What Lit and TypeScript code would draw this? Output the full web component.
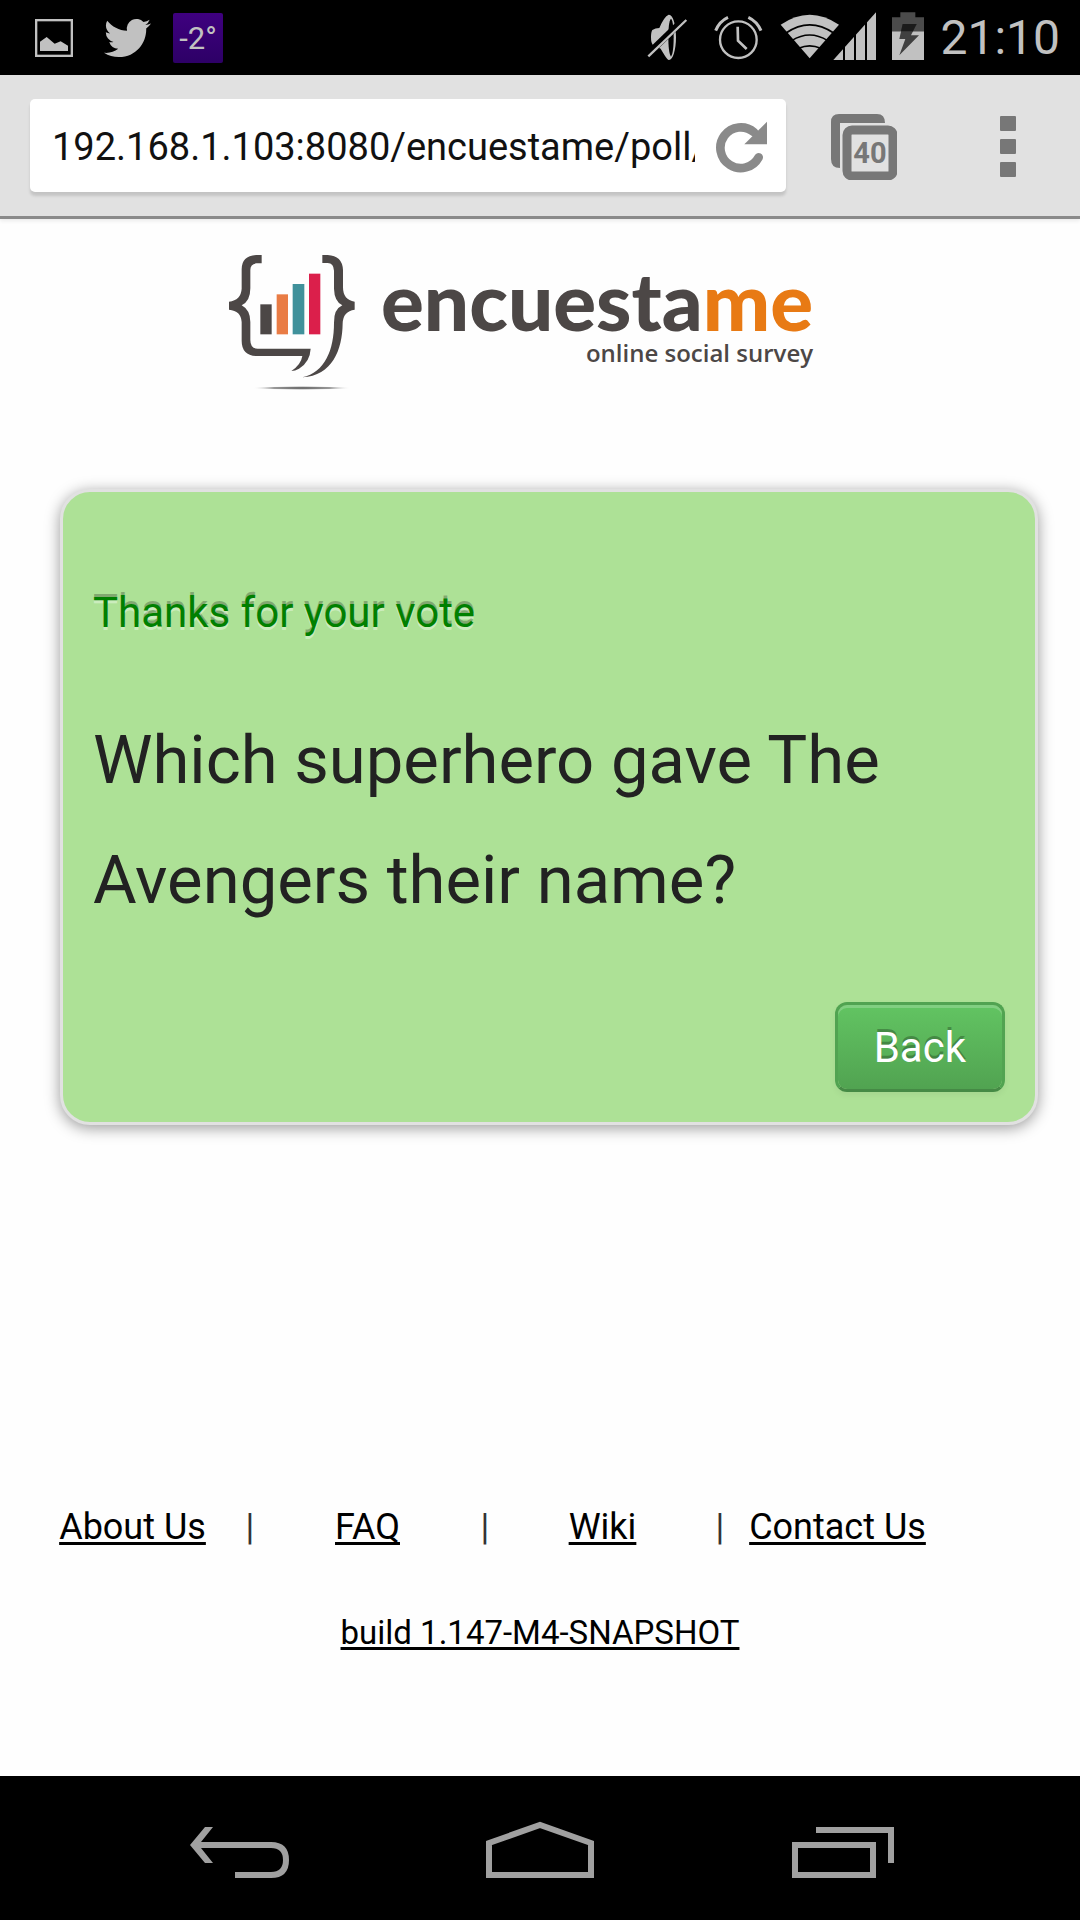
import { LitElement, html, css } from "lit";
import { customElement } from "lit/decorators.js";

@customElement("status-bar")
export class StatusBar extends LitElement {
  static styles = css`
    :host { display: block; background: #000; color: #c1c1c1; }
    .bar { display: flex; justify-content: space-between; align-items: center; height: 75px; padding: 0 20px 0 35px; }
    .group { display: flex; align-items: center; }
    .left { gap: 22px; }
    .right { gap: 16px; }
    svg { display: block; }
    .weather {
      width: 50px; height: 50px; line-height: 52px; border-radius: 2px; box-sizing: border-box;
      background: linear-gradient(#3f007f, #2d0066); text-align: center; font-size: 31px;
    }
    .clock { font-size: 48px; line-height: 77px; }
  `;

  render() {
    return html`
      <div class="bar">
        <div class="group left">
          <svg width="38" height="38" viewBox="0 0 114 114" aria-hidden="true">
            <rect x="3.5" y="3.5" width="107" height="107" fill="none" stroke="#c1c1c1" stroke-width="7" />
            <path fill="#c1c1c1" d="M15 96V68L35 54L59 74L77 67L99 80V96Z" />
          </svg>
          <svg width="56" height="48" viewBox="-4.6 0 28.6 24" aria-hidden="true">
            <path fill="#c1c1c1" d="M23.953 4.57a10 10 0 01-2.825.775 4.958 4.958 0 002.163-2.723c-.951.555-2.005.959-3.127 1.184a4.92 4.92 0 00-8.384 4.482C7.69 8.095 4.067 6.13 1.64 3.162a4.822 4.822 0 00-.666 2.475c0 1.71.87 3.213 2.188 4.096a4.904 4.904 0 01-2.228-.616v.06a4.923 4.923 0 003.946 4.827 4.996 4.996 0 01-2.212.085 4.936 4.936 0 004.604 3.417 9.867 9.867 0 01-6.102 2.105c-.39 0-.779-.023-1.17-.067a13.995 13.995 0 007.557 2.209c9.053 0 13.998-7.496 13.998-13.985 0-.21 0-.42-.015-.63A9.935 9.935 0 0024 4.59z" />
          </svg>
          <span class="weather">-2°</span>
        </div>
        <div class="group right">
          <svg width="51" height="75" viewBox="81 0 153 225" aria-hidden="true">
            <path fill="#c1c1c1" d="M146 44C158 42 168 72 168 112S158 182 146 180C140 176 130 160 122 146L98 134Q93 128 93 112Q93 96 97 90Q106 84 118 84Q132 50 146 44Z" />
            <path fill="#000" d="M153 56C159 62 161 86 161 112S159 162 153 170C147 162 145 138 145 112S147 62 153 56Z" />
            <path d="M82 164L196 54" stroke="#000" stroke-width="20" />
            <path d="M85 169L199 60" stroke="#c1c1c1" stroke-width="7" />
          </svg>
          <svg width="50" height="75" viewBox="282 0 150 225" fill="none" stroke="#c1c1c1" aria-hidden="true">
            <circle cx="355" cy="119" r="55" stroke-width="7" />
            <path d="M353 80L354 122L380 147" stroke-width="8" />
            <path d="M287 92Q298 64 324 52M385 52Q411 64 423 92" stroke-width="9" />
          </svg>
          <svg width="96" height="75" viewBox="480 0 288 225" aria-hidden="true">
            <path fill="#c1c1c1" d="M482 74Q569 14 657 74L569 175Z" />
            <g fill="none" stroke="#000" stroke-width="5">
              <path d="M498 99Q569 50 641 99" />
              <path d="M515 122Q569 88 623 122" />
              <path d="M536 145Q569 130 602 145" />
            </g>
            <path fill="#c1c1c1" d="M640 180L768 37V180Z" />
            <path d="M672 100V182M705 60V182M738 40V182" stroke="#000" stroke-width="6" />
          </svg>
          <svg width="32" height="75" viewBox="816 0 96 225" aria-hidden="true">
            <path fill="#4b4b4b" d="M816 52H841V37H886V52H912V94H816Z" />
            <path fill="#c1c1c1" d="M816 94H912V180H816Z" />
            <path fill="#404040" d="M848 72H890L873 106H897L838 166L856 117H838Z" />
            <path fill="#1b1b1b" d="M848 72H890L879 94H843Z" />
          </svg>
          <time class="clock">21:10</time>
        </div>
      </div>
    `;
  }
}

@customElement("browser-toolbar")
export class BrowserToolbar extends LitElement {
  static styles = css`
    :host { display: block; background: #e1e1e1; border-bottom: 3px solid #8a8a8a; box-shadow: 0 2px 4px rgba(0, 0, 0, 0.08); }
    .bar { display: flex; align-items: center; padding: 24px 50px 24px 30px; }
    .omnibox {
      flex: 1; min-width: 0; display: flex; align-items: center; height: 93px; box-sizing: border-box;
      padding: 2px 17px 0 22px; gap: 20px; background: #fff; border-radius: 5px; box-shadow: 0 4px 3px rgba(0, 0, 0, 0.13);
    }
    .url {
      flex: 1; min-width: 0; height: 60px; padding: 0; border: 0; outline: 0; background: none;
      font: 38px/60px Roboto, sans-serif; color: #111;
    }
    button { display: block; padding: 0; border: 0; background: none; cursor: pointer; }
    svg { display: block; }
    .tabs { margin: 0 89px 0 45px; padding-top: 2px; }
    .count { font: bold 29px Roboto, sans-serif; fill: #777; }
  `;

  render() {
    return html`
      <div class="bar">
        <div class="omnibox">
          <input class="url" type="text" aria-label="Address" value="192.168.1.103:8080/encuestame/poll/" />
          <button type="button" aria-label="Reload">
            <svg width="54" height="54" viewBox="284 359 162 162">
              <path d="M415 471A61 61 0 1 1 401 396" fill="none" stroke="#8a8a8a" stroke-width="26" stroke-linecap="round" />
              <path fill="#fff" d="M428 440H372V432H428Z" />
              <path fill="#8a8a8a" d="M440 364V432H372Z" />
            </svg>
          </button>
        </div>
        <button class="tabs" type="button" aria-label="Open tabs">
          <svg width="66" height="66" viewBox="0 0 66 66">
            <path fill="#777" d="M8 0H46Q54 0 54 9H9V54Q0 54 0 45V8Q0 0 8 0Z" />
            <rect x="16" y="16" width="46" height="46" rx="5" fill="none" stroke="#777" stroke-width="9" />
            <rect x="21" y="21" width="36" height="36" fill="#e1e1e1" />
            <text class="count" x="39" y="49" text-anchor="middle">40</text>
          </svg>
        </button>
        <button type="button" aria-label="Menu">
          <svg width="44" height="62" viewBox="0 0 44 62" fill="#777">
            <rect x="14" y="1" width="16" height="15" rx="1" />
            <rect x="14" y="24" width="16" height="15" rx="1" />
            <rect x="14" y="47" width="16" height="15" rx="1" />
          </svg>
        </button>
      </div>
    `;
  }
}

@customElement("brand-logo")
export class BrandLogo extends LitElement {
  static styles = css`
    :host { display: flex; justify-content: center; padding: 21px 48px 0 0; color: #4c4746; }
    svg { display: block; flex: none; width: 162px; height: 160px; }
    .words { display: flex; flex-direction: column; align-items: flex-end; padding-top: 19px; }
    .name { font: 900 80px/82px Lato, sans-serif; }
    .accent { color: #e87a14; }
    .tagline { font: 600 24px/24px "Open Sans", sans-serif; }
  `;

  render() {
    return html`
      <svg viewBox="0 0 486 480" aria-hidden="true">
        <defs>
          <radialGradient id="shade">
            <stop offset="0" stop-color="#555" />
            <stop offset="0.6" stop-color="#999" />
            <stop offset="1" stop-color="#fff" stop-opacity="0" />
          </radialGradient>
        </defs>
        <g fill="#4c4746">
          <path d="M128 45V70H112Q94 72 94 90V145Q94 184 68 196Q94 210 94 246V300Q94 326 116 326H275Q273 366 240 386Q228 393 217 393Q246 374 250 348H112Q68 346 68 302V246Q66 212 30 209V185Q66 180 68 146V88Q68 47 112 45Z" />
          <path d="M310 45H326Q370 47 372 90V142Q372 180 407 185V209Q372 214 371 250C370 330 340 408 250 412C318 396 345 330 345 248Q344 208 370 196Q346 184 345 146V92Q344 70 326 69H310Z" />
          <rect x="124" y="193" width="34" height="90" />
        </g>
        <rect x="173" y="163" width="34" height="120" fill="#e97c45" />
        <rect x="221" y="132" width="35" height="151" fill="#40919b" />
        <rect x="270" y="101" width="34" height="182" fill="#db1f4b" />
        <ellipse cx="248" cy="444" rx="152" ry="6" fill="url(#shade)" />
      </svg>
      <div class="words">
        <span class="name">encuesta<span class="accent">me</span></span>
        <span class="tagline">online social survey</span>
      </div>
    `;
  }
}

@customElement("vote-card")
export class VoteCard extends LitElement {
  static styles = css`
    :host {
      display: flex; flex-direction: column; margin: 89px 42px 0 60px; padding: 61px 30px 30px;
      border: 3px solid #e1e1e1; border-radius: 30px; background: #ade196;
      box-shadow: 0 3px 15px rgba(0, 0, 0, 0.4); box-sizing: border-box;
    }
    .thanks {
      margin: 30px 0 57px; font-size: 42px; line-height: 60px; color: #008000;
      text-shadow: 0 3px 0 rgba(255, 255, 255, 0.4), 0 -3px 0 rgba(0, 0, 0, 0.25);
    }
    .question { margin: 0 0 62px; font-size: 67px; line-height: 120px; font-weight: 400; color: #222; }
    .back {
      align-self: flex-end; height: 90px; padding: 2px 36px 0; box-sizing: border-box; cursor: pointer;
      font: 42px/60px Roboto, sans-serif; color: #fff; text-shadow: 0 -3px 0 rgba(0, 0, 0, 0.25);
      border: 3px solid #51a351; border-bottom-color: #458a45; border-radius: 12px;
      background: linear-gradient(#62c462, #51a351) padding-box;
      box-shadow: inset 0 3px 0 rgba(255, 255, 255, 0.2), 0 3px 6px rgba(0, 0, 0, 0.05);
    }
  `;

  render() {
    return html`
      <p class="thanks">Thanks for your vote</p>
      <h1 class="question">Which superhero gave The Avengers their name?</h1>
      <button class="back" type="button">Back</button>
    `;
  }
}

@customElement("site-footer")
export class SiteFooter extends LitElement {
  static styles = css`
    :host { display: block; margin-top: auto; padding-bottom: 116px; }
    .links { display: grid; grid-template-columns: repeat(4, 1fr); padding: 0 121px 0 19px; font-size: 36px; line-height: 54px; }
    .cell { display: grid; grid-template-columns: 1fr 8px; justify-items: center; white-space: nowrap; }
    a { color: #000; text-decoration: underline; text-decoration-thickness: 3px; text-underline-offset: 3px; text-decoration-skip-ink: none; }
    .bar { color: #333; }
    .build { margin: 52px 0 0; text-align: center; font-size: 33px; line-height: 54px; }
  `;

  private links = ["About Us", "FAQ", "Wiki", "Contact Us"];

  render() {
    return html`
      <nav class="links">
        ${this.links.map(
          (label, i) => html`<span class="cell"><a href="#">${label}</a>${i < this.links.length - 1
            ? html`<span class="bar">|</span>`
            : ""}</span>`
        )}
      </nav>
      <p class="build"><a href="#">build 1.147-M4-SNAPSHOT</a></p>
    `;
  }
}

@customElement("system-nav")
export class SystemNav extends LitElement {
  static styles = css`
    :host { display: block; background: #000; }
    .bar { display: grid; grid-template-columns: repeat(3, 1fr); padding: 45px 88px 42px; justify-items: center; }
    button { padding: 0; border: 0; background: none; cursor: pointer; }
    svg { display: block; width: 108px; height: 57px; fill: none; stroke: #a0a0a0; stroke-width: 6px; }
  `;

  render() {
    return html`
      <div class="bar">
        <button type="button" aria-label="Back">
          <svg viewBox="0 0 108 57">
            <path d="M14 24H86Q101 24 101 39T86 54H50" />
            <path d="M5 24L20 6H28L16 21V27L28 42H20Z" fill="#a0a0a0" stroke="none" />
          </svg>
        </button>
        <button type="button" aria-label="Home">
          <svg viewBox="0 0 108 57"><path d="M3 22L54 4L105 22V54H3Z" /></svg>
        </button>
        <button type="button" aria-label="Recent apps">
          <svg viewBox="0 0 108 57">
            <rect x="8" y="24" width="78" height="30" />
            <path d="M29 9H104V42" />
          </svg>
        </button>
      </div>
    `;
  }
}

@customElement("app-root")
export class AppRoot extends LitElement {
  static styles = css`
    :host { display: flex; flex-direction: column; min-height: 100vh; background: #fefefe; font-family: Roboto, sans-serif; }
    .page { flex: 1; display: flex; flex-direction: column; }
  `;

  render() {
    return html`
      <status-bar></status-bar>
      <browser-toolbar></browser-toolbar>
      <main class="page">
        <brand-logo></brand-logo>
        <vote-card></vote-card>
        <site-footer></site-footer>
      </main>
      <system-nav></system-nav>
    `;
  }
}
